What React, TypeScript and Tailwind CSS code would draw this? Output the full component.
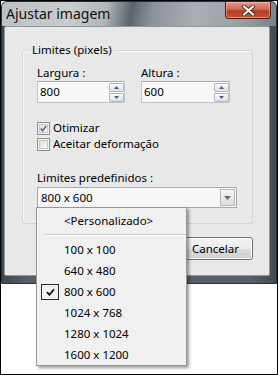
import { ReactNode } from "react";

const presets = ["100 x 100", "640 x 480", "800 x 600", "1024 x 768", "1280 x 1024", "1600 x 1200"];

function SpinInput({ value, wide }: { value: string; wide?: boolean }) {
  return (
    <div
      className={`${wide ? "w-[89px]" : "w-[88px]"} h-[22px] flex items-center justify-between bg-[#f7f7f7] border border-[#c2c5ca] border-t-[#a9acb2]`}
    >
      <span className="pl-[2px] leading-[16px]">{value}</span>
      <div className="flex flex-col gap-[1px]">
        <div className="w-[15px] h-[9px] flex items-center justify-center border border-[#b6bac0] rounded-[1px] bg-[linear-gradient(#f6f7f9,#dde2e8)]">
          <svg width="5" height="3" viewBox="0 0 5 3">
            <path d="M0 3 L2.5 0 L5 3 Z" fill="#4c5d7e" />
          </svg>
        </div>
        <div className="w-[15px] h-[9px] flex items-center justify-center border border-[#b6bac0] rounded-[1px] bg-[linear-gradient(#f6f7f9,#dde2e8)]">
          <svg width="5" height="3" viewBox="0 0 5 3">
            <path d="M0 0 L5 0 L2.5 3 Z" fill="#4c5d7e" />
          </svg>
        </div>
      </div>
    </div>
  );
}

function CheckBox({ checked, label }: { checked?: boolean; label: string }) {
  return (
    <div className="h-[16px] flex items-center">
      <div className="w-[13px] h-[13px] border border-[#8f8f8f] bg-[#f4f4f4] p-[1px]">
        <div className="w-full h-full border border-[#c8c8c8] bg-[linear-gradient(135deg,#dcdcdc,#fafafa)] flex items-center justify-center">
          {checked && (
            <svg width="9" height="9" viewBox="0 0 9 9">
              <path d="M1 4.5 L3.5 7.5 L8 1" fill="none" stroke="#44578a" strokeWidth="1.8" />
            </svg>
          )}
        </div>
      </div>
      <span className="ml-[3px] leading-[16px]">{label}</span>
    </div>
  );
}

function Button({ children }: { children: ReactNode }) {
  return (
    <div className="w-[75px] h-[23px] flex items-center justify-center rounded-[3px] border border-[#707070] bg-[linear-gradient(#f2f2f2_0%,#ebebeb_50%,#dddddd_51%,#cfcfcf_100%)] shadow-[inset_0_0_0_1px_#fcfcfc]">
      {children}
    </div>
  );
}

export default function App() {
  return (
    <div className="w-[278px] h-[375px] bg-white border border-black relative overflow-hidden font-['Noto_Sans',sans-serif] text-[11.5px] text-black">
      {/* window */}
      <div className="h-[283px] w-[276px] flex flex-col rounded-t-[6px] bg-[linear-gradient(90deg,#3f4851,#56606a_10%,#56606a_90%,#434c55)] border border-[#2a3036]">
        {/* title bar */}
        <div className="h-[24px] flex justify-between rounded-t-[5px] bg-[linear-gradient(100deg,#bcc0c4_0%,#c9ccce_25%,#b0b5ba_38%,#5c656f_47%,#8b939a_55%,#a8aeb3_70%,#9ba2a8_85%,#7a828a_100%)]">
          <span className="pl-[4px] pt-[3px] text-[14px] leading-[18px] text-[#111]">Ajustar imagem</span>
          <div className="mr-[5px] w-[46px] h-[17px] flex items-center justify-center rounded-b-[4px] border border-t-0 border-[#5a1b10] bg-[linear-gradient(#e09a88_0%,#d06a52_45%,#b83d25_55%,#c4543a_100%)] shadow-[inset_0_0_0_1px_rgba(255,210,200,0.45)]">
            <svg width="13" height="11" viewBox="0 0 13 11">
              <path d="M2 1.5 L11 9.5 M11 1.5 L2 9.5" stroke="#5a2a20" strokeWidth="4" strokeLinecap="round" />
              <path d="M2 1.5 L11 9.5 M11 1.5 L2 9.5" stroke="#ffffff" strokeWidth="2.2" strokeLinecap="round" />
            </svg>
          </div>
        </div>

        {/* client area */}
        <div className="flex-1 ml-[2px] mr-[6px] mb-[7px] bg-[#e8e8e8] border border-[#8d979f] rounded-[2px]">
          <div className="relative ml-[17px] mt-[23px] w-[231px] h-[174px] border border-[#cfd5da] rounded-[3px] shadow-[inset_1px_1px_0_#f7f7f7]">
            <span className="absolute -top-[9px] left-[7px] px-[2px] bg-[#e8e8e8] leading-[16px]">Limites (pixels)</span>

            <div className="pl-[14px] pt-[14px] flex gap-[16px]">
              <div className="flex flex-col">
                <span className="leading-[16px]">Largura :</span>
                <SpinInput value="800" />
              </div>
              <div className="flex flex-col">
                <span className="leading-[16px]">Altura :</span>
                <SpinInput value="600" wide />
              </div>
            </div>

            <div className="pl-[14px] mt-[17px] flex flex-col">
              <CheckBox checked label="Otimizar" />
              <CheckBox label="Aceitar deformação" />
            </div>

            <div className="pl-[14px] mt-[18px] flex flex-col">
              <span className="leading-[16px]">Limites predefinidos :</span>
              <div className="mt-[1px] w-[200px] h-[21px] flex items-center justify-between bg-[#f6f6f6] border border-[#a9a9a9]">
                <span className="pl-[3px] leading-[16px]">800 x 600</span>
                <div className="mr-[1px] w-[15px] h-[17px] flex items-center justify-center border border-[#b8b8b8] bg-[linear-gradient(#f5f5f5,#dcdcdc)]">
                  <svg width="7" height="4" viewBox="0 0 7 4">
                    <path d="M0 0 L7 0 L3.5 4 Z" fill="#6a6a6a" />
                  </svg>
                </div>
              </div>
            </div>
          </div>

          <div className="ml-[17px] mt-[13px] w-[231px] flex justify-end gap-[6px]">
            <Button>OK</Button>
            <Button>Cancelar</Button>
          </div>
        </div>
      </div>

      {/* open dropdown list */}
      <div className="absolute left-[35px] top-[206px] w-[151px] h-[159px] bg-[#f0f0f0] border border-[#979797] shadow-[2px_2px_3px_rgba(0,0,0,0.4)] flex flex-col">
        <div className="h-[21px] mt-[2px] flex items-center pl-[27px] leading-[16px]">&lt;Personalizado&gt;</div>
        <div className="h-[8px] flex items-center pl-[8px]">
          <div className="w-full h-[2px] border-t border-[#c6c6c6] border-b border-b-[#ffffff]" />
        </div>
        {presets.map((p) => (
          <div key={p} className="h-[21px] flex items-center pl-[4px]">
            <div className="w-[18px] h-[16px] flex items-center justify-center">
              {p === "800 x 600" && (
                <div className="w-[18px] h-[16px] border border-[#2a2a2a] flex items-center justify-center">
                  <svg width="9" height="8" viewBox="0 0 9 8">
                    <path d="M1 4.2 L3.4 6.8 L8 1.2" fill="none" stroke="#111" strokeWidth="1.8" />
                  </svg>
                </div>
              )}
            </div>
            <span className="ml-[5px] leading-[16px]">{p}</span>
          </div>
        ))}
      </div>
    </div>
  );
}
